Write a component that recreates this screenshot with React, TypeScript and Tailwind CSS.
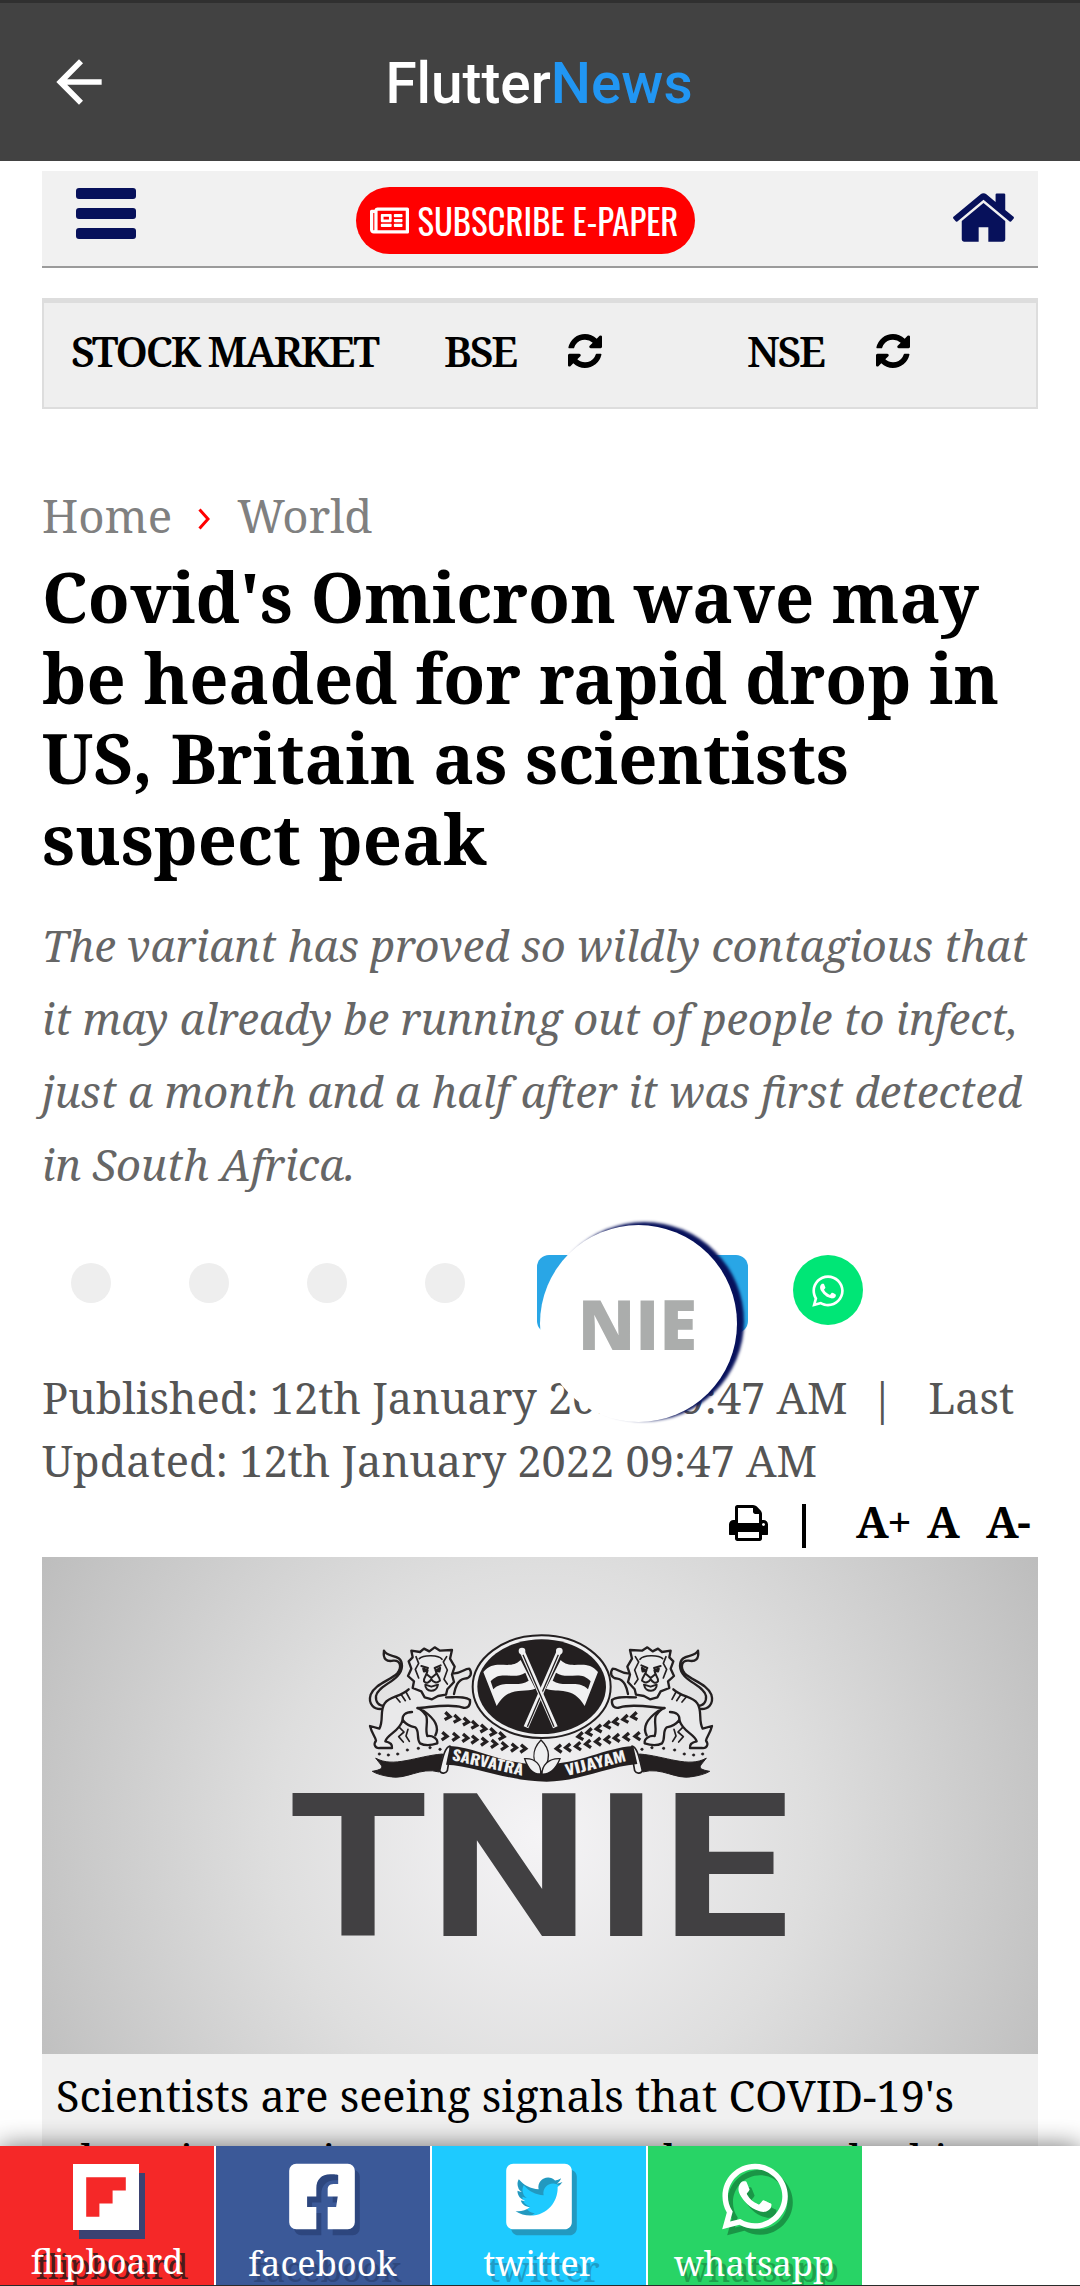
import { FaFacebookSquare, FaRegNewspaper, FaTwitterSquare, FaWhatsapp } from "react-icons/fa";
import { MdArrowBack } from "react-icons/md";

function HomeIcon() {
  return (
    <svg viewBox="24 250 1616 1290" className="h-[49px] w-[61px]" fill="currentColor">
      <path d="M1408 992v480q0 26-19 45t-45 19h-384v-384h-256v384h-384q-26 0-45-19t-19-45v-480q0-1 .5-3t.5-3l575-474 575 474q1 2 1 6zm223-69l-62 74q-8 9-21 11h-3q-13 0-21-7l-692-577-692 577q-12 8-24 7-13-2-21-11l-62-74q-8-10-7-23.5t11-21.5l719-599q32-26 76-26t76 26l244 204v-195q0-14 9-23t23-9h192q14 0 23 9t9 23v408l219 182q10 8 11 21.5t-7 23.5z" />
    </svg>
  );
}

function RefreshIcon() {
  return (
    <svg viewBox="128 128 1536 1536" className="size-[34px] shrink-0" fill="currentColor">
      <path d="M1639 1056q0 5-1 7-64 268-268 434.5t-478 166.5q-146 0-282.5-55t-243.5-157l-129 129q-19 19-45 19t-45-19-19-45v-448q0-26 19-45t45-19h448q26 0 45 19t19 45-19 45l-137 137q71 66 161 102t187 36q134 0 250-65t186-179q11-17 53-117 8-23 30-23h192q13 0 22.5 9.5t9.5 22.5zm25-800v448q0 26-19 45t-45 19h-448q-26 0-45-19t-19-45 19-45l138-138q-148-137-349-137-134 0-250 65t-186 179q-11 17-53 117-8 23-30 23h-199q-13 0-22.5-9.5t-9.5-22.5v-7q65-268 270-434.5t480-166.5q146 0 284 55.5t245 156.5l130-129q19-19 45-19t45 19 19 45z" />
    </svg>
  );
}

function PrintIcon() {
  return (
    <svg viewBox="0 128 1664 1536" className="h-[36px] w-[39px]" fill="currentColor">
      <path d="M384 1536h896v-256h-896v256zm0-640h896v-384h-160q-40 0-68-28t-28-68v-160h-640v640zm1152 64q0-26-19-45t-45-19-45 19-19 45 19 45 45 19 45-19 19-45zm128 0v416q0 13-9.5 22.5t-22.5 9.5h-224v160q0 40-28 68t-68 28h-960q-40 0-68-28t-28-68v-160h-224q-13 0-22.5-9.5t-9.5-22.5v-416q0-79 56.5-135.5t135.5-56.5h64v-544q0-40 28-68t68-28h672q40 0 88 20t76 48l152 152q28 28 48 76t20 88v256h64q79 0 135.5 56.5t56.5 135.5z" />
    </svg>
  );
}

const upperWheat = [[325, 318], [352, 326], [380, 334], [405, 344], [432, 355], [460, 366], [487, 378]];
const lowerWheat = [[316, 378], [348, 380], [378, 383], [405, 388], [434, 394], [464, 401], [494, 408], [524, 412], [552, 415]];
const studs = [[118, 432], [145, 435], [173, 432], [202, 420], [235, 415], [270, 413], [300, 418]];

/* One side of the crest: lion, wheat and ribbon tail. */
function CrestHalf() {
  return (
    <g stroke="#231f20" strokeLinecap="round" strokeLinejoin="round">
      <g fill="none" strokeWidth="7">
        <path d="M132 122C128 148 140 156 160 152C182 150 186 172 172 190C150 212 104 222 92 254C84 280 100 302 132 296M132 122C142 146 186 128 186 168C184 214 116 222 108 258C106 276 116 288 134 288" />
        <path fill="#e9e9ea" d="M206 238C180 262 150 258 134 280C118 304 132 330 118 356L90 348C96 372 106 380 108 392C100 402 104 416 120 414H156C158 402 146 396 136 394C142 372 178 366 188 330C200 346 214 350 226 352C240 364 228 384 240 400C256 408 280 404 292 400C294 384 276 376 262 378C254 356 266 334 258 316C250 304 240 296 232 294C270 292 330 280 366 292C384 298 392 286 390 270C376 258 350 262 318 262" />
        <path d="M188 330C186 316 196 306 216 306M250 302C284 326 300 350 286 376" />
        <path d="M340 190C362 192 372 176 388 176C398 190 392 204 374 206C352 210 346 232 342 252" />
        <path fill="#e9e9ea" d="M214 122L240 126L252 116L268 124L284 112L300 122L336 120L330 146L344 170L336 194L342 216L322 238L318 254L294 258L276 268L254 262L244 244L218 234L222 214L204 198L214 176L206 154L218 142Z" />
        <path strokeWidth="5" d="M228 140L236 160L226 178L236 204M320 140L310 156L322 180L312 208L322 222M238 146C250 134 296 134 306 148M168 262L180 276M184 254L196 272M198 246L210 268M178 352L192 366L176 380L190 396M204 358L198 378L208 394" />
        <path strokeWidth="6" d="M244 168L264 174M302 166L284 174M262 178C264 196 250 200 252 214C260 224 270 214 274 208C280 216 290 222 300 212C300 202 288 194 286 178M262 194L274 204L288 192M256 224C254 246 290 250 294 224L274 230Z" />
        <path fill="#231f20" d="M250 176L262 182L252 184ZM300 174L288 182L298 184Z" />
      </g>
      <g fill="none" strokeWidth="10" strokeLinecap="butt" strokeLinejoin="miter">
        {upperWheat.map(([x, y]) => (
          <path key={x} d={`M${x - 9} ${y - 11}L${x + 5} ${y + 2}L${x - 11} ${y + 11}`} />
        ))}
        {lowerWheat.map(([x, y]) => (
          <path key={x} d={`M${x - 9} ${y - 11}L${x + 5} ${y + 1}L${x - 11} ${y + 12}`} />
        ))}
      </g>
      {studs.map(([x, y]) => (
        <circle key={x} cx={x} cy={y} r="4" fill="#231f20" strokeWidth="1" />
      ))}
      <path fill="#231f20" strokeWidth="3" d="M108 445C160 475 230 438 308 432L298 486C240 470 200 510 150 500C130 497 110 492 97 484C120 480 130 475 124 466Z" />
      <path fill="#efeff0" strokeWidth="5" d="M330 408C314 412 308 444 299 482C304 494 318 490 322 482L332 424Z" />
    </g>
  );
}

function Flag() {
  return (
    <g>
      <path fill="#f1f1f2" d="M430 186C466 142 508 184 542 150L586 236C548 250 506 226 470 288Z" />
      <path fill="#231f20" d="M452 214C482 178 520 212 556 188L566 212C530 236 490 206 460 238Z" />
      <path fill="none" stroke="#f1f1f2" strokeWidth="15" d="M547 125L646 352" />
      <path fill="none" stroke="#231f20" strokeWidth="4" d="M549 134L642 350" />
      <circle cx="546" cy="123" r="10" fill="#f1f1f2" />
    </g>
  );
}

function NewsArtwork() {
  return (
    <svg viewBox="0 0 996 497" className="block h-[497px] w-[996px]">
      <g transform="translate(298 53) scale(.33333)">
        <CrestHalf />
        <g transform="translate(1206 0) scale(-1 1)">
          <CrestHalf />
        </g>
        <ellipse cx="605" cy="230" rx="207" ry="154" fill="#efeff0" stroke="#231f20" strokeWidth="6" />
        <ellipse cx="605" cy="230" rx="193" ry="142" fill="#231f20" />
        <g transform="translate(1204 0) scale(-1 1)">
          <Flag />
        </g>
        <Flag />
        <path fill="#231f20" d="M330 408C420 414 480 462 603 464C726 462 790 414 880 408L892 462C800 470 720 514 620 515C500 514 410 468 318 464Z" />
        <g fill="#efeff0" stroke="#231f20" strokeWidth="4">
          <path d="M603 390C638 424 626 460 603 488C580 460 570 424 603 390Z" />
          <path d="M554 446C590 444 604 468 602 492C576 494 562 470 554 446Z" />
          <path d="M660 446C624 444 606 468 606 492C632 494 650 470 660 446Z" />
        </g>
        <g className="font-['Oswald'] text-[43px] font-bold" fill="#f1f1f2">
          <text transform="translate(334 450) rotate(12.5)" textLength="218" lengthAdjust="spacingAndGlyphs">SARVATRA</text>
          <text transform="translate(680 498) rotate(-14)" textLength="186" lengthAdjust="spacingAndGlyphs">VIJAYAM</text>
        </g>
      </g>
      <g className="font-['Roboto'] text-[200px] font-bold" fill="#414042">
        <text transform="translate(246 378.500) scale(1.135 1)">T</text>
        <text transform="translate(387 378.500) scale(1.14 1)">N</text>
        <text transform="translate(552 378.500) scale(1.1 1)">I</text>
        <text transform="translate(619 378.500) scale(1.145 1)">E</text>
      </g>
    </svg>
  );
}

function ShareBar() {
  return (
    <nav className="absolute inset-x-0 bottom-0 flex h-[140px] gap-[2px] border-b border-[#2b2b2b] bg-white text-[34.4px] leading-[40px] whitespace-nowrap text-white shadow-[0_0_24px_rgba(0,0,0,0.55)]">
      <a className="flex w-[214px] flex-col items-center overflow-hidden bg-[#f52828]">
        <svg viewBox="0 0 5 5" className="mt-[18px] mr-[3px] size-[66px] shrink-0 drop-shadow-[6px_9px_0_#3b4272]">
          <path fill="#fff" d="M0 0h5v5H0z" />
          <path fill="#f52828" d="M1 1h3v1H3v1H2v1H1z" />
        </svg>
        <span className="mt-[11px] text-shadow-[5px_5px_0_#4a1b1b]">flipboard</span>
      </a>
      <a className="flex w-[214px] flex-col items-center overflow-hidden bg-[#3b5998]">
        <FaFacebookSquare className="mt-[13px] mr-[2px] h-[75px] w-[66px] shrink-0 drop-shadow-[5px_6px_0_#2d467e]" />
        <span className="mt-[9px] mr-[1px] text-shadow-[5px_6px_0_#2f477c]">facebook</span>
      </a>
      <a className="flex w-[214px] flex-col items-center overflow-hidden bg-[#1ecaff]">
        <FaTwitterSquare className="mt-[13px] mr-[1px] h-[75px] w-[66px] shrink-0 drop-shadow-[5px_6px_0_#2299c0]" />
        <span className="mt-[9px] text-shadow-[5px_6px_0_#1f9cc6]">twitter</span>
      </a>
      <a className="flex w-[214px] flex-col items-center overflow-hidden bg-[#28d466]">
        <FaWhatsapp className="mt-[13px] h-[75px] w-[66px] shrink-0 drop-shadow-[5px_6px_0_#1a9546]" />
        <span className="mt-[9px] mr-[2px] text-shadow-[5px_6px_0_#1f9f4c]">whatsapp</span>
      </a>
    </nav>
  );
}

export default function App() {
  return (
    <div className="relative flex h-[2286px] w-[1080px] flex-col overflow-hidden bg-white font-['Noto_Serif',serif]">
      <header className="grid h-[161px] shrink-0 grid-cols-[1fr_auto_1fr] items-center border-t-[3px] border-[#303030] bg-[#424242] px-[45px] pt-[5px]">
        <MdArrowBack className="-mt-[5px] size-[68px] text-white" />
        <h2 className="mr-[2px] font-['Roboto'] text-[56.7px] leading-none font-medium text-white">
          Flutter<span className="text-[#2196f3]">News</span>
        </h2>
      </header>

      <main className="flex flex-col px-[42px]">
        <div className="mt-[10px] flex h-[97px] items-start justify-between border-b-[2px] border-[#9b9b9b] bg-[#f1f1f1] pr-[24px] pl-[34px]">
          <div className="mt-[17px] flex w-[60px] flex-col gap-[9px]">
            <span className="h-[11px] rounded-[3px] bg-[#07115b]" />
            <span className="h-[11px] rounded-[3px] bg-[#07115b]" />
            <span className="h-[11px] rounded-[3px] bg-[#07115b]" />
          </div>
          <button className="mt-[16px] mr-[39px] flex h-[67px] w-[339px] items-center rounded-full bg-[#ff0000] pl-[14px] text-white">
            <FaRegNewspaper className="h-[35px] w-[39px]" />
            <span className="ml-[9px] font-['Oswald'] text-[34.8px] leading-none font-normal whitespace-nowrap">SUBSCRIBE E-PAPER</span>
          </button>
          <span className="mt-[22px] text-[#07115b]">
            <HomeIcon />
          </span>
        </div>

        <div className="mt-[30px] flex h-[111px] items-center border-[2px] border-t-[5px] border-[#dddddd] bg-[#efefef] pb-[8px] text-[42px] leading-none font-semibold tracking-[-2.2px] whitespace-nowrap">
          <span className="ml-[27px] w-[373px]">STOCK MARKET</span>
          <span className="w-[124px]">BSE</span>
          <RefreshIcon />
          <span className="ml-[145px] w-[129px]">NSE</span>
          <RefreshIcon />
        </div>

        <div className="mt-[76px] flex h-[60px] items-center text-[45.7px] leading-[61px] text-[#808080]">
          <span>Home</span>
          <svg viewBox="0 0 12 22" className="mt-[8px] ml-[26px] h-[22px] w-[12px]" fill="none" stroke="#f00" strokeWidth="3">
            <path d="M1.5 1.5L10 11L1.5 20.500" />
          </svg>
          <span className="ml-[27px]">World</span>
        </div>

        <h1 className="mt-[12px] text-[68.5px] leading-[80.7px] font-bold whitespace-nowrap text-black">
          Covid's Omicron wave may
          <br />
          be headed for rapid drop in
          <br />
          US, Britain as scientists
          <br />
          suspect peak
        </h1>

        <p className="mt-[29px] text-[43.4px] leading-[73.2px] whitespace-nowrap text-[#666666] italic">
          The variant has proved so wildly contagious that
          <br />
          it may already be running out of people to infect,
          <br />
          just a month and a half after it was first detected
          <br />
          in South Africa.
        </p>

        <div className="relative flex h-[164px] items-start pt-[53px] pl-[29px]">
          <div className="mt-[8px] flex gap-[78px]">
            <span className="size-[40px] rounded-full bg-[#eeeeee]" />
            <span className="size-[40px] rounded-full bg-[#eeeeee]" />
            <span className="size-[40px] rounded-full bg-[#eeeeee]" />
            <span className="size-[40px] rounded-full bg-[#eeeeee]" />
          </div>
          <span className="ml-[72px] h-[78px] w-[211px] rounded-[12px] bg-[#29a6e6]" />
          <span className="ml-[45px] flex size-[70px] items-center justify-center rounded-full bg-[#00e676] text-white">
            <FaWhatsapp className="mt-[3px] h-[36px] w-[32px]" />
          </span>
          <div className="absolute top-[23px] left-[498px] z-10 flex size-[197px] items-center justify-center rounded-full bg-white pt-[1px] pr-[2px] shadow-[6px_-2px_3px_1px_#07115b]">
            <span className="font-['Open_Sans'] text-[69px] leading-none font-extrabold text-[#abadac]">NIE</span>
          </div>
        </div>

        <p className="text-[43.3px] leading-[63.3px] whitespace-pre text-[#555555]">
          {"Published: 12th January 2022 09:47 AM  |   Last\nUpdated: 12th January 2022 09:47 AM"}
        </p>

        <div className="flex h-[65px] items-start text-[43.4px] leading-[60px] font-bold tracking-[-1.5px] text-black">
          <span className="mt-[13px] ml-[687px]">
            <PrintIcon />
          </span>
          <span className="mt-[12px] ml-[34px] h-[44px] w-[4px] bg-black" />
          <span className="ml-[50px] w-[71px]">A+</span>
          <span className="w-[59px]">A</span>
          <span>A-</span>
        </div>

        <figure className="bg-[#f1f1f1]">
          <div className="bg-[radial-gradient(circle_at_50%_56%,#f5f4f6_0px,#dedede_270px,#c5c5c5_500px,#bdbdbd_570px)]">
            <NewsArtwork />
          </div>
          <figcaption className="px-[14px] pt-[10px] text-[43.3px] leading-[63.3px] whitespace-nowrap text-black">
            Scientists are seeing signals that COVID-19's
            <br />
            alarming omicron wave may have peaked in
          </figcaption>
        </figure>
      </main>

      <ShareBar />
    </div>
  );
}
